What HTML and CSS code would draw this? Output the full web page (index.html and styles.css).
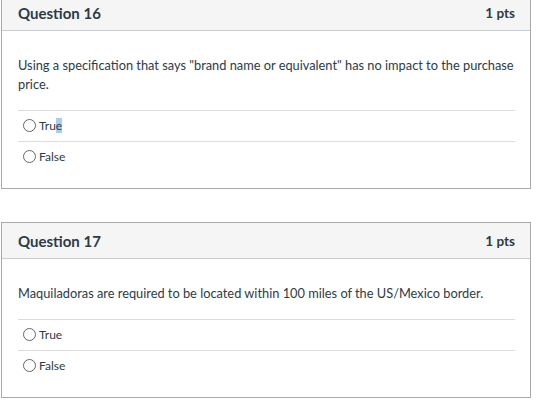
FILE: index.html
```html
<!DOCTYPE html>
<html>
<head>
<meta charset="utf-8">
<link rel="stylesheet" href="styles.css">
</head>
<body>
<div class="page">
  <section class="card card-first">
    <header class="card-head">
      <span class="q-title">Question 16</span>
      <span class="q-pts">1 pts</span>
    </header>
    <div class="card-body">
      <p class="q-text">Using a specification that says "brand name or equivalent" has no impact to the purchase price.</p>
      <div class="answers">
        <label class="answer"><span class="radio"></span><span class="a-label">Tru<span class="sel">e</span></span></label>
        <label class="answer"><span class="radio"></span><span class="a-label">False</span></label>
      </div>
    </div>
  </section>
  <section class="card">
    <header class="card-head">
      <span class="q-title">Question 17</span>
      <span class="q-pts">1 pts</span>
    </header>
    <div class="card-body">
      <p class="q-text">Maquiladoras are required to be located within 100 miles of the US/Mexico border.</p>
      <div class="answers">
        <label class="answer"><span class="radio"></span><span class="a-label">True</span></label>
        <label class="answer"><span class="radio"></span><span class="a-label">False</span></label>
      </div>
    </div>
  </section>
</div>
</body>
</html>
```
FILE: styles.css
```css
html, body {
  margin: 0;
  padding: 0;
  background: #ffffff;
}
body {
  font-family: Lato, "Open Sans", sans-serif;
  color: #2d3b45;
}
.page {
  display: flex;
  flex-direction: column;
  gap: 33px;
  padding-left: 1px;
}
.card {
  width: 530px;
  box-sizing: border-box;
  border: 1px solid #a9a9a9;
  background: #fff;
}
.card-first {
  margin-top: -6px;
}
.card-head {
  height: 35px;
  box-sizing: content-box;
  background: #f5f5f5;
  border-bottom: 1px solid #c7cdd1;
  display: flex;
  align-items: center;
  justify-content: space-between;
  padding: 0 15px 0 16px;
}
.q-title {
  font-weight: 700;
  font-size: 15px;
}
.q-pts {
  font-weight: 700;
  font-size: 13.5px;
}
.card-body {
  padding: 25px 12px 16px 16px;
}
.q-text {
  margin: 0 0 16px 0;
  font-size: 12.8px;
  line-height: 19px;
}
.answers {
  display: flex;
  flex-direction: column;
  margin-right: 3px;
}
.answer {
  display: flex;
  align-items: center;
  height: 29px;
  padding-bottom: 1px;
  border-top: 1px solid #dcdcdc;
  font-size: 12px;
  gap: 3px;
  padding-left: 5px;
}
.radio {
  width: 11px;
  height: 11px;
  border: 1px solid #666;
  border-radius: 50%;
  background: #fff;
}
.sel {
  background: #aacdf0;
}
```
